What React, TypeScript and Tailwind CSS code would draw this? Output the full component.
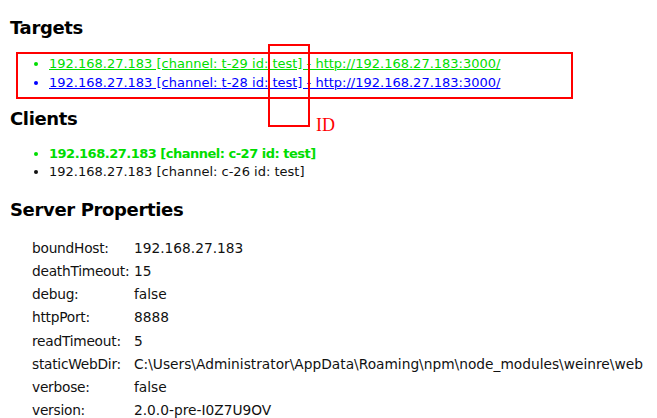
import React from "react"

const targets = [
  { channel: "t-29", color: "text-[#00dd00]" },
  { channel: "t-28", color: "text-[#0000ff]" },
]

const props: [string, string][] = [
  ["boundHost:", "192.168.27.183"],
  ["deathTimeout:", "15"],
  ["debug:", "false"],
  ["httpPort:", "8888"],
  ["readTimeout:", "5"],
  ["staticWebDir:", "C:\\Users\\Administrator\\AppData\\Roaming\\npm\\node_modules\\weinre\\web"],
  ["verbose:", "false"],
  ["version:", "2.0.0-pre-I0Z7U9OV"],
]

export default function App() {
  return (
    <div
      className="relative w-[657px] h-[418px] overflow-hidden bg-white text-[13px] text-[#111]"
      style={{ fontFamily: "Tahoma, 'DejaVu Sans', sans-serif" }}
    >
      <div className="px-[10px]">
        {/* ── Targets ── */}
        <h2 className="mt-[16px] text-[18px] font-bold leading-[24px] tracking-[-0.35px] text-black">Targets</h2>
        <ul className="mt-[14px] list-disc pl-[39px]">
          {targets.map((t) => (
            <li key={t.channel} className={`leading-[19px] ${t.color}`}>
              <a className="underline">
                192.168.27.183 [channel: {t.channel} id: test] - http://192.168.27.183:3000/
              </a>
            </li>
          ))}
        </ul>

        {/* ── Clients ── */}
        <h2 className="mt-[15px] text-[18px] font-bold leading-[24px] tracking-[-0.35px] text-black">Clients</h2>
        <ul className="mt-[14px] list-disc pl-[39px]">
          <li className="leading-[18px] font-bold tracking-[-0.5px] text-[#00dd00]">
            192.168.27.183 [channel: c-27 id: test]
          </li>
          <li className="leading-[18px]">192.168.27.183 [channel: c-26 id: test]</li>
        </ul>

        {/* ── Server Properties ── */}
        <h2 className="mt-[17px] text-[18px] font-bold leading-[24px] tracking-[-0.35px] text-black">
          Server Properties
        </h2>
        <div className="mt-[15px] pl-[22px] text-[13.75px]">
          {props.map(([k, v]) => (
            <div key={k} className="flex leading-[23.15px] whitespace-nowrap">
              <span className="w-[102px] shrink-0 tracking-[-0.25px]">{k}</span>
              <span>{v}</span>
            </div>
          ))}
        </div>
      </div>

      {/* ── annotation overlays ── */}
      <div className="absolute left-[16px] top-[52px] w-[557px] h-[47px] border-2 border-[#ff0000]" />
      <div className="absolute left-[268px] top-[44px] w-[42px] h-[83px] border-2 border-[#ff0000]" />
      <div
        className="absolute left-[316px] top-[114px] text-[18px] leading-[22px] text-[#ff0000]"
        style={{ fontFamily: "'Liberation Serif', serif" }}
      >
        ID
      </div>
    </div>
  )
}
